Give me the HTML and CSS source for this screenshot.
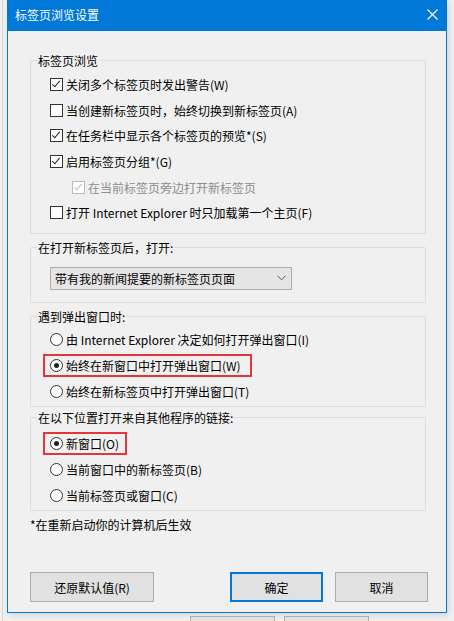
FILE: index.html
```html
<!DOCTYPE html>
<html lang="zh-CN">

<head>
    <meta charset="UTF-8">
    <meta name="viewport" content="width=device-width, initial-scale=1.0">
    <title>标签页浏览设置</title>
    <link rel="stylesheet" href="styles.css">
</head>

<body>
    <div class="desktop">
        <div class="dialog">
            <!-- Title bar -->
            <div class="titlebar">
                <span class="title">标签页浏览设置</span>
                <span class="close">
                    <svg width="11" height="11" viewBox="0 0 11 11">
                        <path d="M0.5 0.5 L10.5 10.5 M10.5 0.5 L0.5 10.5" stroke="#fff" stroke-width="1.1" fill="none" />
                    </svg>
                </span>
            </div>

            <div class="dialog-body">
                <!-- Tab browsing -->
                <div class="group group-tabs">
                    <div class="group-title">标签页浏览</div>
                    <div class="rows">
                        <div class="row">
                            <span class="checkbox checked"></span>关闭多个标签页时发出警告(W)
                        </div>
                        <div class="row">
                            <span class="checkbox"></span>当创建新标签页时，始终切换到新标签页(A)
                        </div>
                        <div class="row">
                            <span class="checkbox checked"></span>在任务栏中显示各个标签页的预览*(S)
                        </div>
                        <div class="row">
                            <span class="checkbox checked"></span>启用标签页分组*(G)
                        </div>
                        <div class="row sub disabled">
                            <span class="checkbox checked"></span>在当前标签页旁边打开新标签页
                        </div>
                        <div class="row">
                            <span class="checkbox"></span>打开 Internet Explorer 时只加载第一个主页(F)
                        </div>
                    </div>
                </div>

                <!-- New tab page -->
                <div class="group group-newtab">
                    <div class="group-title">在打开新标签页后，打开:</div>
                    <div class="select">
                        <span>带有我的新闻提要的新标签页页面</span>
                        <svg width="9" height="6" viewBox="0 0 9 6">
                            <path d="M0.5 0.8 L4.5 4.8 L8.5 0.8" stroke="#555" stroke-width="1" fill="none" />
                        </svg>
                    </div>
                </div>

                <!-- Popups -->
                <div class="group group-popup">
                    <div class="group-title">遇到弹出窗口时:</div>
                    <div class="rows">
                        <div class="row">
                            <span class="radio"></span>由 Internet Explorer 决定如何打开弹出窗口(I)
                        </div>
                        <div class="row">
                            <span class="mark mark-wide"><span class="radio selected"></span>始终在新窗口中打开弹出窗口(W)</span>
                        </div>
                        <div class="row">
                            <span class="radio"></span>始终在新标签页中打开弹出窗口(T)
                        </div>
                    </div>
                </div>

                <!-- External links -->
                <div class="group group-links">
                    <div class="group-title">在以下位置打开来自其他程序的链接:</div>
                    <div class="rows">
                        <div class="row">
                            <span class="mark"><span class="radio selected"></span>新窗口(O)</span>
                        </div>
                        <div class="row">
                            <span class="radio"></span>当前窗口中的新标签页(B)
                        </div>
                        <div class="row">
                            <span class="radio"></span>当前标签页或窗口(C)
                        </div>
                    </div>
                </div>

                <p class="note">*在重新启动你的计算机后生效</p>

                <div class="buttons">
                    <button class="btn btn-reset">还原默认值(R)</button>
                    <button class="btn btn-ok">确定</button>
                    <button class="btn btn-cancel">取消</button>
                </div>
            </div>
        </div>

        <!-- window behind the dialog -->
        <div class="back-buttons">
            <span class="back-btn"></span>
            <span class="back-btn"></span>
        </div>
    </div>
</body>

</html>
```

FILE: styles.css
```css
/* Page */
body {
    margin: 0;
    width: 454px;
    height: 621px;
    overflow: hidden;
    background-color: #f0f0f0;
    font-family: "Noto Sans CJK SC", "Noto Sans", sans-serif;
    font-size: 12px;
    color: #000;
}

.desktop {
    margin-left: 2px;
    padding-left: 4px;
    border-left: 1px solid #d4d4d4;
    height: 621px;
}

/* Dialog */
.dialog {
    width: 440px;
    height: 613px;
    box-sizing: border-box;
    border: 1px solid #0078d7;
    border-top: none;
    background-color: #f0f0f0;
    display: flex;
    flex-direction: column;
    box-shadow: 2px 2px 6px rgba(0, 0, 0, 0.12);
}

.titlebar {
    height: 31px;
    background-color: #0078d7;
    color: #fff;
    display: flex;
    align-items: center;
    justify-content: space-between;
    padding: 0 9px 0 8px;
    margin: 0 -1px;
}

.title {
    line-height: 16px;
    margin-top: -2px;
}

.close {
    display: flex;
    margin-top: -2px;
}

.dialog-body {
    flex: 1;
    display: flex;
    flex-direction: column;
    padding: 29px 20px 10px 22px;
}

/* Group boxes */
.group {
    border: 1px solid #dcdcdc;
    border-radius: 2px;
    padding: 0 0 0 19px;
}

.group-title {
    width: fit-content;
    line-height: 16px;
    margin: -8px 0 0 -13px;
    padding: 0 1px;
    background-color: #f0f0f0;
}

.group-tabs {
    padding-bottom: 7px;
}

.group-tabs .rows {
    margin-top: 3px;
}

.group-tabs .row {
    height: 25.6px;
}

.group-newtab {
    margin-top: 13px;
    padding-bottom: 12px;
}

.group-popup {
    margin-top: 13px;
    padding-bottom: 1px;
}

.group-popup .rows {
    margin-top: 2px;
}

.group-links {
    margin-top: 10px;
    padding-bottom: 1px;
}

.group-links .rows {
    margin-top: 5px;
}

.row {
    height: 26px;
    display: flex;
    align-items: center;
    white-space: nowrap;
}

.row.sub {
    padding-left: 22px;
}

.row.disabled {
    color: #8d8d8d;
}

/* Check boxes and radios */
.checkbox,
.radio {
    width: 13px;
    height: 13px;
    box-sizing: border-box;
    border: 1px solid #333;
    background-color: #fff;
    margin-right: 3px;
    flex-shrink: 0;
    position: relative;
}

.checkbox.checked::after {
    content: "";
    position: absolute;
    left: 3px;
    top: 0px;
    width: 3px;
    height: 7px;
    border-right: 1.3px solid #222;
    border-bottom: 1.3px solid #222;
    transform: rotate(40deg);
}

.disabled .checkbox {
    border-color: #bcbcbc;
}

.disabled .checkbox.checked::after {
    border-color: #bcbcbc;
}

.radio {
    border-radius: 50%;
}

.radio.selected::after {
    content: "";
    position: absolute;
    left: 3px;
    top: 3px;
    width: 5px;
    height: 5px;
    border-radius: 50%;
    background-color: #222;
}

/* Red highlight marks */
.mark {
    display: flex;
    align-items: center;
    height: 19px;
    border: 2px solid #e4363a;
    margin-left: -7px;
    padding: 0 6px 0 5px;
}

.mark-wide {
    padding-right: 9px;
}

/* Dropdown */
.select {
    width: 242px;
    height: 23px;
    box-sizing: border-box;
    margin-top: 11px;
    border: 1px solid #adadad;
    background-color: #e5e5e5;
    display: flex;
    align-items: center;
    justify-content: space-between;
    padding: 0 5px 0 4px;
}

.note {
    margin: 6px 0 0 0;
    line-height: 16px;
}

/* Buttons */
.buttons {
    margin-top: auto;
    margin-right: -2px;
    display: flex;
}

.btn {
    height: 30px;
    font-family: inherit;
    font-size: 12px;
    color: #000;
    background-color: #e1e1e1;
    border: 1px solid #adadad;
    padding: 0;
}

.btn-reset {
    width: 124px;
}

.btn-ok {
    width: 93px;
    margin-left: auto;
    border: 2px solid #0078d7;
}

.btn-cancel {
    width: 93px;
    margin-left: 12px;
}

/* Window behind */
.back-buttons {
    display: flex;
    margin: 3px 0 0 183px;
}

.back-btn {
    width: 85px;
    height: 20px;
    box-sizing: border-box;
    border: 1px solid #adadad;
    background-color: #e1e1e1;
}

.back-btn + .back-btn {
    margin-left: 9px;
}
```
